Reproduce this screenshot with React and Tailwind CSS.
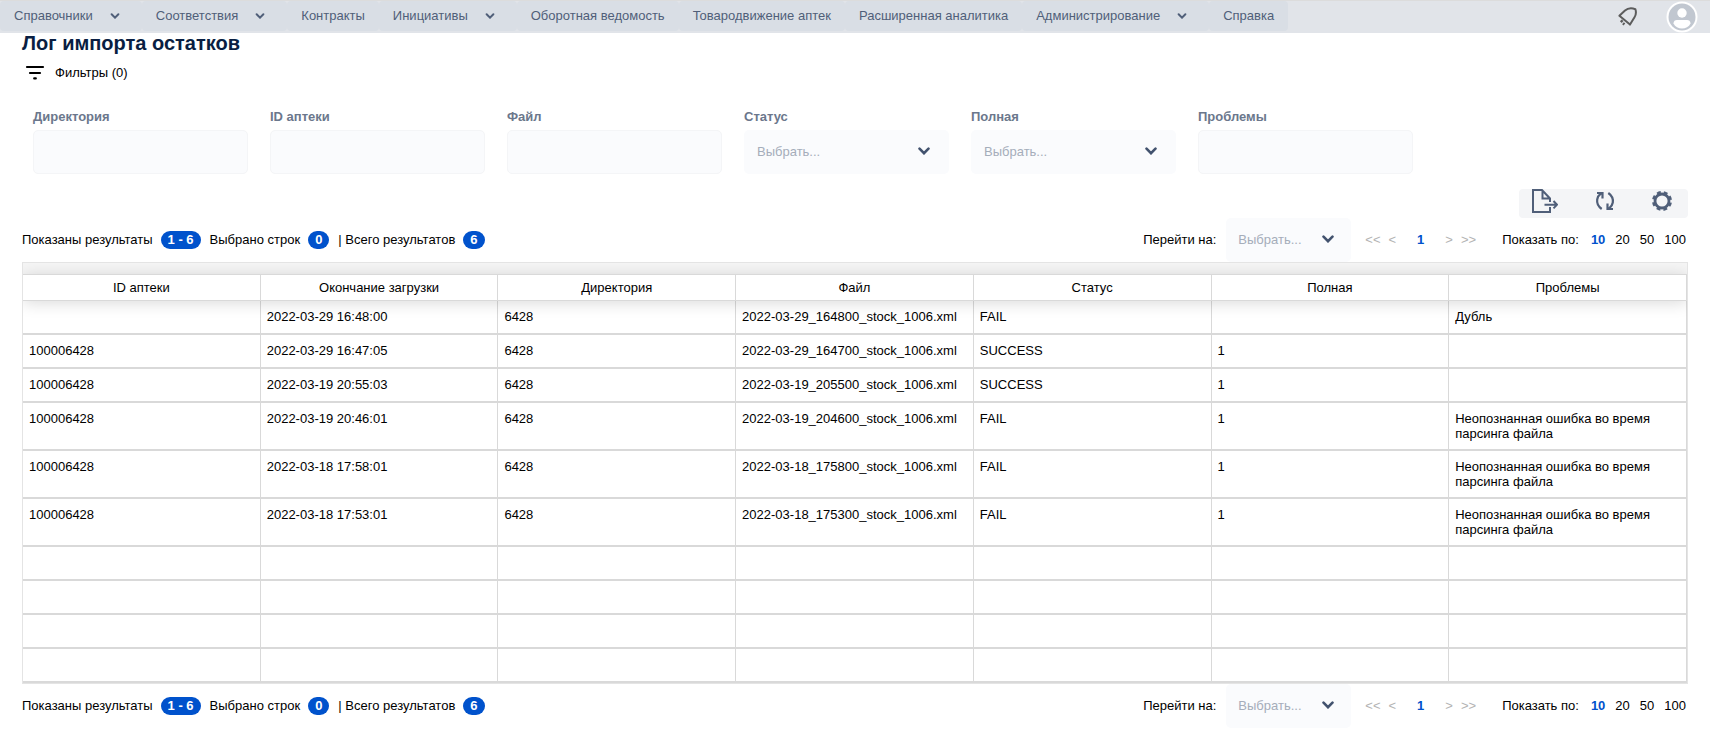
import React from 'react';

const NAV_ITEMS = [
  { label: 'Справочники', menu: true },
  { label: 'Соответствия', menu: true },
  { label: 'Контракты' },
  { label: 'Инициативы', menu: true },
  { label: 'Оборотная ведомость' },
  { label: 'Товародвижение аптек' },
  { label: 'Расширенная аналитика' },
  { label: 'Администрирование', menu: true },
  { label: 'Справка' },
];

const FILTERS = [
  { id: 'directory', label: 'Директория', type: 'text' },
  { id: 'pharmacy', label: 'ID аптеки', type: 'text' },
  { id: 'file', label: 'Файл', type: 'text' },
  { id: 'status', label: 'Статус', type: 'select', options: ['SUCCESS', 'FAIL'] },
  { id: 'full', label: 'Полная', type: 'select', options: ['0', '1'] },
  { id: 'problems', label: 'Проблемы', type: 'text' },
];

const COLUMNS = ['ID аптеки', 'Окончание загрузки', 'Директория', 'Файл', 'Статус', 'Полная', 'Проблемы'];

const PARSE_ERROR = 'Неопознанная ошибка во время парсинга файла';

const ROWS = [
  ['', '2022-03-29 16:48:00', '6428', '2022-03-29_164800_stock_1006.xml', 'FAIL', '', 'Дубль'],
  ['100006428', '2022-03-29 16:47:05', '6428', '2022-03-29_164700_stock_1006.xml', 'SUCCESS', '1', ''],
  ['100006428', '2022-03-19 20:55:03', '6428', '2022-03-19_205500_stock_1006.xml', 'SUCCESS', '1', ''],
  ['100006428', '2022-03-19 20:46:01', '6428', '2022-03-19_204600_stock_1006.xml', 'FAIL', '1', PARSE_ERROR],
  ['100006428', '2022-03-18 17:58:01', '6428', '2022-03-18_175800_stock_1006.xml', 'FAIL', '1', PARSE_ERROR],
  ['100006428', '2022-03-18 17:53:01', '6428', '2022-03-18_175300_stock_1006.xml', 'FAIL', '1', PARSE_ERROR],
];

const PAGE_SIZE = 10;
const EMPTY_ROWS = Array.from({ length: PAGE_SIZE - ROWS.length }, () => COLUMNS.map(() => ''));

const Chevron = ({ className }) => (
  <svg viewBox="0 0 12 8" fill="none" stroke="currentColor" strokeWidth="2.6" strokeLinecap="round" className={className} aria-hidden="true">
    <path d="M1.5 1.6 6 6.2l4.5-4.6" />
  </svg>
);

const BellIcon = () => (
  <svg viewBox="0 0 20 20" fill="none" stroke="currentColor" strokeWidth="2" strokeLinejoin="round" className="h-5 w-5" aria-hidden="true">
    <path d="M1.4 8.8 7 3.6C9.6 1.3 13.6.8 17.4 2.2c1 3.2.8 5.4-.9 8L12 17.6Z" />
    <path d="M2.8 13.4 4.6 15M5 16.2l1.400 1.200" strokeWidth="2.6" />
  </svg>
);

const AvatarIcon = () => (
  <svg viewBox="0 0 32 32" className="h-8 w-8" aria-hidden="true">
    <circle cx="16" cy="16" r="15.5" fill="#fff" />
    <circle cx="16" cy="16" r="13.5" fill="#c1c7d0" />
    <circle cx="16" cy="12" r="4.7" fill="#fff" />
    <path d="M7.5 22.5c0-2.500 1.500-3.500 3.500-3.500h10c2 0 3.500 1 3.500 3.500-1.500 3.300-5 5-8.500 5s-7-1.700-8.500-5Z" fill="#fff" />
  </svg>
);

const FilterIcon = () => (
  <svg viewBox="0 0 20 16" stroke="currentColor" strokeWidth="2.2" strokeLinecap="round" className="h-4 w-5" aria-hidden="true">
    <path d="M2 2h16M5 8h10M9.2 13.4h1.6" />
  </svg>
);

const ExportIcon = () => (
  <svg viewBox="0 0 26 24" fill="none" stroke="currentColor" strokeWidth="2" className="h-6 w-[26px]" aria-hidden="true">
    <path d="M18 13V9.5L10 1H1v22h17v-5M10.5 1v8.5H18" />
    <path d="M12.5 15.7H25M21.5 12l3.500 3.700-3.500 3.700" />
  </svg>
);

const RefreshIcon = () => (
  <svg viewBox="0 0 20 20" fill="none" stroke="currentColor" strokeWidth="2.2" className="h-5 w-5" aria-hidden="true">
    <path d="M6.700 18C3.200 15.500 1.700 12 2.200 8.500c.3-2.300 1.800-4.500 4-6.300M2 2h5.500v5.500" />
    <path d="M13.300 2c3.500 2.500 5 6 4.500 9.500-.3 2.300-1.800 4.500-4 6.300M18 18h-5.500v-5.500" />
  </svg>
);

const GearIcon = () => (
  <svg viewBox="0 0 20 20" fill="none" stroke="currentColor" className="h-5 w-5" aria-hidden="true">
    <circle cx="10" cy="10" r="7" strokeWidth="2.8" />
    <circle cx="10" cy="10" r="8.6" strokeWidth="2.800" strokeDasharray="3.777 2.977" strokeDashoffset="-1.500" />
  </svg>
);

const FilterField = ({ filter }) => (
  <div className={filter.type === 'select' ? 'w-[205px]' : 'w-[215px]'}>
    <label htmlFor={filter.id} className="mb-[5px] block leading-4 font-bold text-[#6b778c]">
      {filter.label}
    </label>
    {filter.type === 'select' ? (
      <div className="relative">
        <select
          id={filter.id}
          defaultValue=""
          className="h-11 w-full appearance-none rounded-[5px] bg-[#fafbfd] px-[13px] text-[#a5adba]"
        >
          <option value="">Выбрать...</option>
          {filter.options.map((option) => (
            <option key={option}>{option}</option>
          ))}
        </select>
        <Chevron className="pointer-events-none absolute top-[17px] right-[18px] h-2 w-3.5 text-[#42526e]" />
      </div>
    ) : (
      <input id={filter.id} type="text" className="block h-11 w-full rounded-[5px] border border-[#f4f5f7] bg-[#fafbfd] px-3" />
    )}
  </div>
);

const Badge = ({ children }) => (
  <span className="inline-flex h-[18px] items-center rounded-full bg-[#0052cc] px-[7px] font-bold text-white">{children}</span>
);

const ResultsBar = ({ id }) => (
  <div className="flex h-11 items-center justify-between">
    <div className="flex items-center">
      <span className="mr-2">Показаны результаты</span>
      <Badge>1 - 6</Badge>
      <span className="mr-2 ml-[9px]">Выбрано строк</span>
      <Badge>0</Badge>
      <span className="mr-2 ml-[9px]">| Всего результатов</span>
      <Badge>6</Badge>
    </div>

    <div className="flex items-center pr-0.5">
      <label htmlFor={id} className="mr-2.5">Перейти на:</label>
      <div className="relative w-[125px]">
        <select id={id} defaultValue="" className="h-11 w-full appearance-none rounded-[5px] bg-[#fafbfd] px-3 text-[#a5adba]">
          <option value="">Выбрать...</option>
          <option>1</option>
        </select>
        <Chevron className="pointer-events-none absolute top-[17px] right-4 h-2 w-3.5 text-[#42526e]" />
      </div>
      <nav className="ml-3.5 flex items-center text-[#b3b3b3]" aria-label="Страницы">
        <button type="button" className="mr-2">&lt;&lt;</button>
        <button type="button">&lt;</button>
        <button type="button" className="mx-[21px] font-bold text-[#0052cc]">1</button>
        <button type="button" className="mr-2">&gt;</button>
        <button type="button">&gt;&gt;</button>
      </nav>
      <span className="mr-3 ml-[26px]">Показать по:</span>
      <div className="flex gap-2.5">
        <button type="button" className="font-bold text-[#0052cc]">10</button>
        <button type="button">20</button>
        <button type="button">50</button>
        <button type="button">100</button>
      </div>
    </div>
  </div>
);

const LogTable = () => (
  <div className="overflow-hidden border border-[#e4e4e4] bg-[#f5f5f5] pt-[11px]">
    <table className="w-full table-fixed border-separate border-spacing-0">
      <thead className="relative z-10 shadow-[0_2px_16px_rgba(0,0,0,0.15)]">
        <tr>
          {COLUMNS.map((column) => (
            <th key={column} className="h-[27px] border-y border-r border-[#d9d9d9] bg-white font-normal">
              {column}
            </th>
          ))}
        </tr>
      </thead>
      <tbody className="bg-white">
        {[...ROWS, ...EMPTY_ROWS].map((row, index) => (
          <tr key={index}>
            {row.map((cell, cellIndex) => (
              <td
                key={cellIndex}
                className="h-[34px] border-r border-b-2 border-[#d9d9d9] px-1.5 pt-2 pb-2 align-top leading-[15px]"
              >
                {cell}
              </td>
            ))}
          </tr>
        ))}
      </tbody>
    </table>
  </div>
);

const App = () => (
  <div className="bg-white font-['Liberation_Sans',Arial,sans-serif] text-[13px] leading-4 text-black">
    <header className="flex h-[33px] items-center justify-between border-t border-[#dcdcdc] bg-[#e1e4e9] pr-3">
      <nav className="mb-0.5 flex text-[#505f79]">
        {NAV_ITEMS.map((item) =>
          item.menu ? (
            <button key={item.label} type="button" className="flex h-[30px] items-center rounded bg-[#d9dee5] pr-[22px] pl-3.5">
              {item.label}
              <Chevron className="ml-[17px] h-1.5 w-2.5" />
            </button>
          ) : (
            <a key={item.label} href="#" className="flex h-[30px] items-center rounded bg-[#d9dee5] px-3.5">
              {item.label}
            </a>
          )
        )}
      </nav>
      <div className="flex items-center gap-7">
        <button type="button" aria-label="Уведомления" className="text-[#5c5c5c]">
          <BellIcon />
        </button>
        <button type="button" aria-label="Профиль">
          <AvatarIcon />
        </button>
      </div>
    </header>

    <main className="px-[22px]">
      <h1 className="text-xl leading-5 font-bold text-[#091e42]">Лог импорта остатков</h1>
      <button type="button" className="mt-3 flex items-center gap-2.5 pl-[3px]">
        <FilterIcon />
        Фильтры (0)
      </button>

      <form className="mt-7 flex gap-[22px] px-[11px]">
        {FILTERS.map((filter) => (
          <FilterField key={filter.id} filter={filter} />
        ))}
      </form>

      <div className="mt-[15px] flex justify-end">
        <div className="flex h-[29px] items-start justify-between gap-[37px] rounded bg-[#f4f5f7] pr-4 pl-[13px] text-[#505f79]">
          <button type="button" aria-label="Экспорт"><ExportIcon /></button>
          <button type="button" aria-label="Обновить" className="pt-0.5"><RefreshIcon /></button>
          <button type="button" aria-label="Настройки" className="pt-0.5"><GearIcon /></button>
        </div>
      </div>

      <ResultsBar id="page-top" />
      <LogTable />
      <ResultsBar id="page-bottom" />
    </main>
  </div>
);

export default App;
